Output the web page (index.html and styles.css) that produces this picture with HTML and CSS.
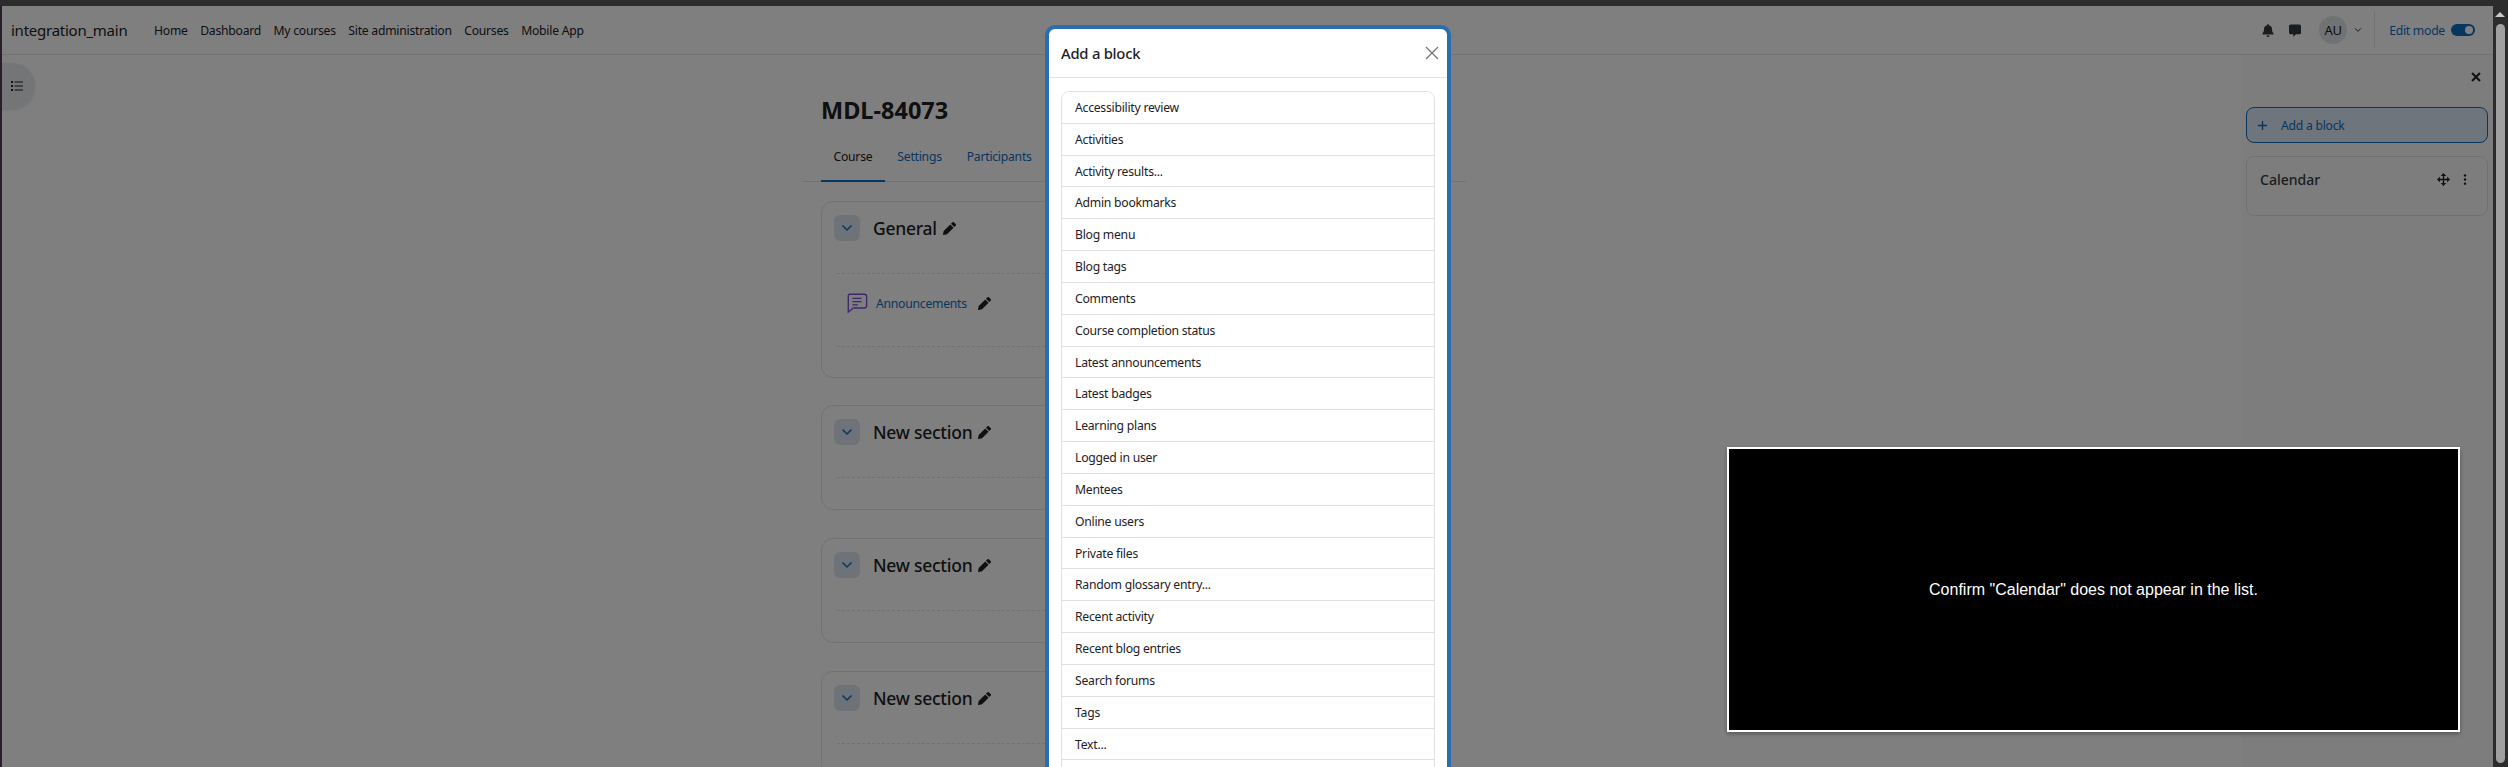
FILE: index.html
```html
<!DOCTYPE html>
<html lang="en">
<head>
	<meta charset="UTF-8">
	<meta name="viewport" content="width=device-width, initial-scale=1.0">
	<title>MDL-84073</title>

	<link rel="stylesheet" href="styles.css">
</head>
<body>
	<div class="window-top"></div>

	<div class="window">
		<div class="page">

			<header class="navbar">
				<a class="brand">integration_main</a>
				<nav class="primary-nav">
					<a>Home</a>
					<a>Dashboard</a>
					<a>My courses</a>
					<a>Site administration</a>
					<a>Courses</a>
					<a>Mobile App</a>
				</nav>
				<div class="usernav">
					<svg class="nav-icon" viewBox="0 0 448 512"><path d="M224 512a64 64 0 0 0 64-64H160a64 64 0 0 0 64 64zm215-150c-19-21-55-52-55-154 0-78-54-140-128-155V32a32 32 0 1 0-64 0v21C118 68 64 130 64 208c0 102-36 133-55 154a31 31 0 0 0 23 54h384a31 31 0 0 0 23-54z"/></svg>
					<svg class="nav-icon message-icon" viewBox="0 0 512 512"><path d="M64 0h384a64 64 0 0 1 64 64v288a64 64 0 0 1-64 64H300l-90 90c-10 8-26 2-26-12v-78H64a64 64 0 0 1-64-64V64A64 64 0 0 1 64 0z"/></svg>
					<span class="avatar">AU</span>
					<svg class="caret" viewBox="0 0 12 8"><path d="M1.500 1.500 6 6l4.500-4.500"/></svg>
					<div class="editmode">
						<span>Edit mode</span>
						<span class="toggle"></span>
					</div>
				</div>
			</header>

			<div class="body-row">
				<div class="drawer-left">
					<button class="drawer-toggle">
						<svg viewBox="0 0 12 10"><path d="M0 0h2v2H0zM0 4h2v2H0zM0 8h2v2H0zM3.500 .5H12v1H3.500zM3.500 4.500H12v1H3.500zM3.500 8.500H12v1H3.500z"/></svg>
					</button>
				</div>

				<main class="main">
					<h1>MDL-84073</h1>
					<ul class="tabs">
						<li class="active">Course</li>
						<li>Settings</li>
						<li>Participants</li>
					</ul>

					<section class="section section-first">
						<div class="section-head">
							<span class="collapse"><svg viewBox="0 0 12 8"><path d="M1.500 1.500 6 6l4.500-4.500"/></svg></span>
							<h3>General</h3>
							<svg class="pencil" viewBox="0 0 512 512"><path d="M497 75 437 15a50 50 0 0 0-71 0l-53 53 131 131 53-53a50 50 0 0 0 0-71zM285 96 27 354 1 486c-3 15 10 28 25 25l132-26 258-258z"/></svg>
						</div>
						<div class="activities">
							<div class="activity">
								<svg class="forum-icon" viewBox="0 0 24 24"><path d="M4 2.500h16a2.500 2.500 0 0 1 2.500 2.500v10a2.500 2.500 0 0 1-2.500 2.500H8l-5.500 4.500V4a1.500 1.500 0 0 1 1.500-1.500z"/><path d="M7 7h10M7 10.500h10M7 14h6"/></svg>
								<a>Announcements</a>
								<svg class="pencil" viewBox="0 0 512 512"><path d="M497 75 437 15a50 50 0 0 0-71 0l-53 53 131 131 53-53a50 50 0 0 0 0-71zM285 96 27 354 1 486c-3 15 10 28 25 25l132-26 258-258z"/></svg>
							</div>
						</div>
					</section>

					<section class="section">
						<div class="section-head">
							<span class="collapse"><svg viewBox="0 0 12 8"><path d="M1.500 1.500 6 6l4.500-4.500"/></svg></span>
							<h3>New section</h3>
							<svg class="pencil" viewBox="0 0 512 512"><path d="M497 75 437 15a50 50 0 0 0-71 0l-53 53 131 131 53-53a50 50 0 0 0 0-71zM285 96 27 354 1 486c-3 15 10 28 25 25l132-26 258-258z"/></svg>
						</div>
						<div class="activities activities-empty"></div>
					</section>

					<section class="section">
						<div class="section-head">
							<span class="collapse"><svg viewBox="0 0 12 8"><path d="M1.500 1.500 6 6l4.500-4.500"/></svg></span>
							<h3>New section</h3>
							<svg class="pencil" viewBox="0 0 512 512"><path d="M497 75 437 15a50 50 0 0 0-71 0l-53 53 131 131 53-53a50 50 0 0 0 0-71zM285 96 27 354 1 486c-3 15 10 28 25 25l132-26 258-258z"/></svg>
						</div>
						<div class="activities activities-empty"></div>
					</section>

					<section class="section">
						<div class="section-head">
							<span class="collapse"><svg viewBox="0 0 12 8"><path d="M1.500 1.500 6 6l4.500-4.500"/></svg></span>
							<h3>New section</h3>
							<svg class="pencil" viewBox="0 0 512 512"><path d="M497 75 437 15a50 50 0 0 0-71 0l-53 53 131 131 53-53a50 50 0 0 0 0-71zM285 96 27 354 1 486c-3 15 10 28 25 25l132-26 258-258z"/></svg>
						</div>
						<div class="activities activities-empty"></div>
					</section>
				</main>

				<aside class="drawer-right">
					<div class="drawer-close">
						<svg viewBox="0 0 10 10"><path d="M1 1l8 8M9 1l-8 8"/></svg>
					</div>
					<div class="add-block">
						<svg viewBox="0 0 12 12"><path d="M6 1v10M1 6h10"/></svg>
						<span>Add a block</span>
					</div>
					<div class="block">
						<h5>Calendar</h5>
						<svg class="move-icon" viewBox="0 0 12 12"><path d="M6 0l2.500 2.700H6.600v2.700h2.700V3.500L12 6 9.300 8.500V6.600H6.600v2.700h1.900L6 12 3.500 9.300h1.900V6.600H2.700v1.900L0 6l2.700-2.500v1.900h2.700V2.700H3.500z"/></svg>
						<svg class="dots-icon" viewBox="0 0 4 12"><circle cx="2" cy="1.500" r="1.300"/><circle cx="2" cy="6" r="1.300"/><circle cx="2" cy="10.500" r="1.300"/></svg>
					</div>
				</aside>
			</div>
		</div>

		<div class="scrollbar">
			<span class="arrow"></span>
			<div class="thumb"></div>
		</div>
	</div>

	<div class="backdrop"></div>

	<div class="modal">
		<div class="modal-head">
			<h5>Add a block</h5>
			<svg class="modal-close" viewBox="0 0 14 14"><path d="M1 1l12 12M13 1 1 13"/></svg>
		</div>
		<div class="modal-body">
			<ul class="block-list">
				<li>Accessibility review</li>
				<li>Activities</li>
				<li>Activity results...</li>
				<li>Admin bookmarks</li>
				<li>Blog menu</li>
				<li>Blog tags</li>
				<li>Comments</li>
				<li>Course completion status</li>
				<li>Latest announcements</li>
				<li>Latest badges</li>
				<li>Learning plans</li>
				<li>Logged in user</li>
				<li>Mentees</li>
				<li>Online users</li>
				<li>Private files</li>
				<li>Random glossary entry...</li>
				<li>Recent activity</li>
				<li>Recent blog entries</li>
				<li>Search forums</li>
				<li>Tags</li>
				<li>Text...</li>
				<li></li>
			</ul>
		</div>
	</div>

	<div class="instruction">Confirm "Calendar" does not appear in the list.</div>
</body>
</html>
```

FILE: styles.css
```css
html, body {
	height: 100%;
}

body {
	margin: 0;
	overflow: hidden;
	background: #fff;
	color: #1d2125;
	font-family: "Noto Sans", sans-serif;
	font-size: 12.2px;
	letter-spacing: -.25px;
}

h1, h3, h5, ul {
	margin: 0;
	padding: 0;
}

ul {
	list-style: none;
}

.window-top {
	height: 6px;
	background: #2c2c2c;
}

.window {
	display: flex;
	height: 761px;
	border-left: 2px solid #2a1d2c;
}

.page {
	display: flex;
	flex-direction: column;
	flex: 1;
	min-width: 0;
	background: #fff;
	overflow: hidden;
}

.navbar {
	display: flex;
	flex: none;
	align-items: center;
	height: 48px;
	padding-left: 9px;
	border-bottom: 1px solid #dee2e6;
}

.brand {
	width: 143px;
	font-size: 15px;
}

.primary-nav {
	display: flex;
	gap: 12.500px;
}

.usernav {
	display: flex;
	align-items: center;
	margin-left: auto;
	padding-right: 18px;
}

.nav-icon {
	width: 12px;
	height: 13px;
	margin-right: 15px;
	fill: #343a40;
}

.message-icon {
	margin-right: 18px;
}

.avatar {
	display: flex;
	align-items: center;
	justify-content: center;
	width: 28px;
	height: 28px;
	border-radius: 50%;
	background: #e1e4e8;
	font-size: 13px;
}

.caret {
	width: 8px;
	height: 6px;
	margin: 0 12px 0 7px;
	fill: none;
	stroke: #343a40;
	stroke-width: 1.500;
}

.editmode {
	display: flex;
	align-items: center;
	gap: 6px;
	height: 36px;
	padding-left: 14px;
	border-left: 1px solid #dee2e6;
	color: #0f6cbf;
}

.toggle {
	position: relative;
	width: 24px;
	height: 12px;
	border-radius: 6px;
	background: #0f6cbf;
}

.toggle::after {
	content: "";
	position: absolute;
	top: 2px;
	right: 2px;
	width: 8px;
	height: 8px;
	border-radius: 50%;
	background: #fff;
}

.body-row {
	display: flex;
	flex: 1;
}

.drawer-left {
	width: 800px;
	padding-top: 8px;
}

.drawer-toggle {
	display: flex;
	align-items: center;
	justify-content: center;
	width: 33px;
	height: 46px;
	padding: 0 4px 0 0;
	border: 0;
	border-radius: 0 23px 23px 0;
	background: #e9ebee;
	box-shadow: 0 1px 3px rgba(0, 0, 0, .12);
}

.drawer-toggle svg {
	width: 12px;
	height: 10px;
	fill: #1d2125;
}

.main {
	width: 664px;
}

h1 {
	margin: 41px 0 0 19px;
	font-size: 23.500px;
	line-height: 28px;
	font-weight: 700;
	letter-spacing: 0;
}

.tabs {
	display: flex;
	margin-top: 18px;
	border-bottom: 1px solid #dee2e6;
	color: #0f6cbf;
}

.tabs li {
	padding: 6px 12.500px 15px;
	line-height: 17px;
	border-bottom: 2px solid transparent;
	margin-bottom: -1px;
}

.tabs li:first-child {
	margin-left: 19px;
}

.tabs .active {
	color: #1d2125;
	border-bottom-color: #0f6cbf;
}

.section {
	margin: 28px 19px 0;
	height: 105px;
	padding: 13px 12px 0;
	box-sizing: border-box;
	border: 1px solid #dee2e6;
	border-radius: 12px;
}

.section-first {
	margin-top: 19px;
	height: 177px;
}

.section-first + .section {
	margin-top: 27px;
}

.section-head {
	display: flex;
	align-items: center;
}

.collapse {
	display: flex;
	align-items: center;
	justify-content: center;
	width: 26px;
	height: 26px;
	margin-right: 13px;
	border-radius: 6px;
	background: #dbe7f3;
}

.collapse svg {
	width: 12px;
	height: 8px;
	fill: none;
	stroke: #0f6cbf;
	stroke-width: 1.500;
}

h3 {
	font-size: 17.500px;
	font-weight: 500;
	line-height: 26px;
}

.pencil {
	width: 13px;
	height: 13px;
	margin-left: 6px;
	fill: #1d2125;
}

.activities {
	margin: 32px 0 0 3px;
	height: 72px;
	border-top: 1px dashed #dee2e6;
	border-bottom: 1px dashed #dee2e6;
}

.activities-empty {
	height: 0;
	border-bottom: 0;
}

.activity {
	display: flex;
	align-items: center;
	height: 58px;
	padding-left: 9px;
	color: #0f6cbf;
}

.forum-icon {
	width: 22px;
	height: 22px;
	margin-right: 8px;
	fill: none;
	stroke: #7b4fd6;
	stroke-width: 1.500;
}

.activity .pencil {
	margin-left: 11px;
}

.drawer-right {
	flex: none;
	width: 242px;
	margin-left: auto;
	padding: 0 5px;
	background: #fbfbfb;
}

.drawer-close {
	display: flex;
	justify-content: flex-end;
	padding: 17px 7px 0 0;
}

.drawer-close svg {
	width: 10px;
	height: 10px;
	fill: none;
	stroke: #1d2125;
	stroke-width: 2;
}

.add-block {
	display: flex;
	align-items: center;
	height: 36px;
	margin-top: 25px;
	padding-left: 10px;
	box-sizing: border-box;
	border: 1px solid #0f6cbf;
	border-radius: 8px;
	background: #dcebfb;
	color: #0f6cbf;
}

.add-block svg {
	width: 11px;
	height: 11px;
	margin-right: 13px;
	fill: none;
	stroke: #0f6cbf;
	stroke-width: 1.500;
}

.block {
	display: flex;
	align-items: center;
	height: 60px;
	margin-top: 13px;
	padding: 0 20px 14px 13px;
	box-sizing: border-box;
	border: 1px solid #dee2e6;
	border-radius: 8px;
}

.block h5 {
	flex: 1;
	font-size: 14px;
	font-weight: 500;
	letter-spacing: 0;
	color: #343a40;
}

.move-icon {
	width: 13px;
	height: 13px;
	fill: #1d2125;
}

.dots-icon {
	width: 4px;
	height: 11px;
	margin-left: 13px;
	fill: #1d2125;
}

.scrollbar {
	position: relative;
	width: 15px;
	background: #2c2c2c;
}

.arrow {
	position: absolute;
	top: 6px;
	left: 2px;
	border: 5px solid transparent;
	border-top: 0;
	border-bottom: 5px solid #c8c8c8;
}

.thumb {
	position: absolute;
	top: 18px;
	left: 3px;
	bottom: 4px;
	width: 9px;
	border-radius: 5px;
	background: #a0a0a0;
}

/* overlays */
.backdrop {
	position: absolute;
	top: 6px;
	left: 2px;
	right: 15px;
	bottom: 0;
	background: rgba(0, 0, 0, .5);
}

.modal {
	position: absolute;
	top: 25px;
	left: 1045px;
	bottom: 0;
	width: 398px;
	overflow: hidden;
	border: 4px solid #2a6db0;
	border-bottom: 0;
	border-radius: 10px 10px 0 0;
	background: #fff;
}

.modal-head {
	display: flex;
	align-items: center;
	justify-content: space-between;
	height: 48px;
	padding: 0 8px 0 12px;
	border-bottom: 1px solid #dee2e6;
}

.modal-head h5 {
	font-size: 14.800px;
	font-weight: 500;
}

.modal-close {
	width: 14px;
	height: 14px;
	fill: none;
	stroke: #777;
	stroke-width: 1.300;
}

.modal-body {
	padding: 13px 12px;
}

.block-list {
	border: 1px solid #dee2e6;
	border-radius: 8px;
}

.block-list li {
	height: 31.830px;
	padding-left: 13px;
	box-sizing: border-box;
	line-height: 31px;
	border-bottom: 1px solid #dee2e6;
}

.instruction {
	position: absolute;
	top: 447px;
	left: 1727px;
	display: flex;
	align-items: center;
	justify-content: center;
	width: 733px;
	height: 285px;
	box-sizing: border-box;
	border: 2px solid #fff;
	background: #000;
	color: #fff;
	font-family: "Liberation Sans", sans-serif;
	font-size: 16px;
	letter-spacing: 0;
	box-shadow: 0 2px 4px rgba(0, 0, 0, .3);
}
```
